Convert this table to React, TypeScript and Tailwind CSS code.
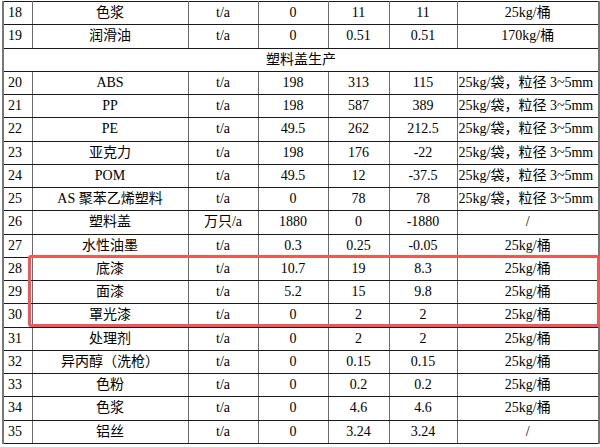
import React from 'react'

type Row = { no: string; name: string; unit: string; a: string; b: string; c: string; pack: string }

const rowsTop: Row[] = [
  { no: '18', name: '色浆', unit: 't/a', a: '0', b: '11', c: '11', pack: '25kg/桶' },
  { no: '19', name: '润滑油', unit: 't/a', a: '0', b: '0.51', c: '0.51', pack: '170kg/桶' },
]

const grain = '25kg/袋，粒径 3~5mm'

const rowsBottom: Row[] = [
  { no: '20', name: 'ABS', unit: 't/a', a: '198', b: '313', c: '115', pack: grain },
  { no: '21', name: 'PP', unit: 't/a', a: '198', b: '587', c: '389', pack: grain },
  { no: '22', name: 'PE', unit: 't/a', a: '49.5', b: '262', c: '212.5', pack: grain },
  { no: '23', name: '亚克力', unit: 't/a', a: '198', b: '176', c: '-22', pack: grain },
  { no: '24', name: 'POM', unit: 't/a', a: '49.5', b: '12', c: '-37.5', pack: grain },
  { no: '25', name: 'AS 聚苯乙烯塑料', unit: 't/a', a: '0', b: '78', c: '78', pack: grain },
  { no: '26', name: '塑料盖', unit: '万只/a', a: '1880', b: '0', c: '-1880', pack: '/' },
  { no: '27', name: '水性油墨', unit: 't/a', a: '0.3', b: '0.25', c: '-0.05', pack: '25kg/桶' },
  { no: '28', name: '底漆', unit: 't/a', a: '10.7', b: '19', c: '8.3', pack: '25kg/桶' },
  { no: '29', name: '面漆', unit: 't/a', a: '5.2', b: '15', c: '9.8', pack: '25kg/桶' },
  { no: '30', name: '罩光漆', unit: 't/a', a: '0', b: '2', c: '2', pack: '25kg/桶' },
  { no: '31', name: '处理剂', unit: 't/a', a: '0', b: '2', c: '2', pack: '25kg/桶' },
  { no: '32', name: '异丙醇（洗枪）', unit: 't/a', a: '0', b: '0.15', c: '0.15', pack: '25kg/桶' },
  { no: '33', name: '色粉', unit: 't/a', a: '0', b: '0.2', c: '0.2', pack: '25kg/桶' },
  { no: '34', name: '色浆', unit: 't/a', a: '0', b: '4.6', c: '4.6', pack: '25kg/桶' },
  { no: '35', name: '铝丝', unit: 't/a', a: '0', b: '3.24', c: '3.24', pack: '/' },
]

const td = 'border-y border-y-[#1a1a1a] border-x border-x-[#6b6b6b] p-0 text-center align-middle leading-none'

function DataRow({ r }: { r: Row }) {
  return (
    <tr className="h-[23.26px]">
      <td className={`${td} !text-left pl-[4px] border-l-2 border-l-[#777]`}>{r.no}</td>
      <td className={td}>{r.name}</td>
      <td className={td}>{r.unit}</td>
      <td className={td}>{r.a}</td>
      <td className={td}>{r.b}</td>
      <td className={td}>{r.c}</td>
      <td className={`${td} ${r.pack === grain ? '!text-left pl-[1px]' : ''} border-r-2 border-r-[#777]`}>{r.pack}</td>
    </tr>
  )
}

export default function App() {
  return (
    <div className="w-[600px] h-[447px] bg-white overflow-hidden">
      <div className="relative pl-[2px] pt-[1px]">
        <table
          className="border-collapse table-fixed w-[596px] text-[14px] text-black"
          style={{ fontFamily: '"Liberation Serif", "Noto Sans CJK SC", serif' }}
        >
          <colgroup>
            <col className="w-[29px]" />
            <col className="w-[156px]" />
            <col className="w-[70px]" />
            <col className="w-[70px]" />
            <col className="w-[61px]" />
            <col className="w-[68px]" />
            <col className="w-[142px]" />
          </colgroup>
          <tbody>
            {rowsTop.map((r) => (
              <DataRow key={r.no} r={r} />
            ))}
            <tr className="h-[23.26px]">
              <td colSpan={7} className={`${td} border-x-2 border-x-[#777]`}>
                塑料盖生产
              </td>
            </tr>
            {rowsBottom.map((r) => (
              <DataRow key={r.no} r={r} />
            ))}
          </tbody>
        </table>
        {/* highlight box around rows 28-30 */}
        <div className="absolute left-[28px] top-[255px] w-[572px] h-[72px] border-[3px] border-[#f25757] rounded-[3px] pointer-events-none" />
      </div>
    </div>
  )
}
